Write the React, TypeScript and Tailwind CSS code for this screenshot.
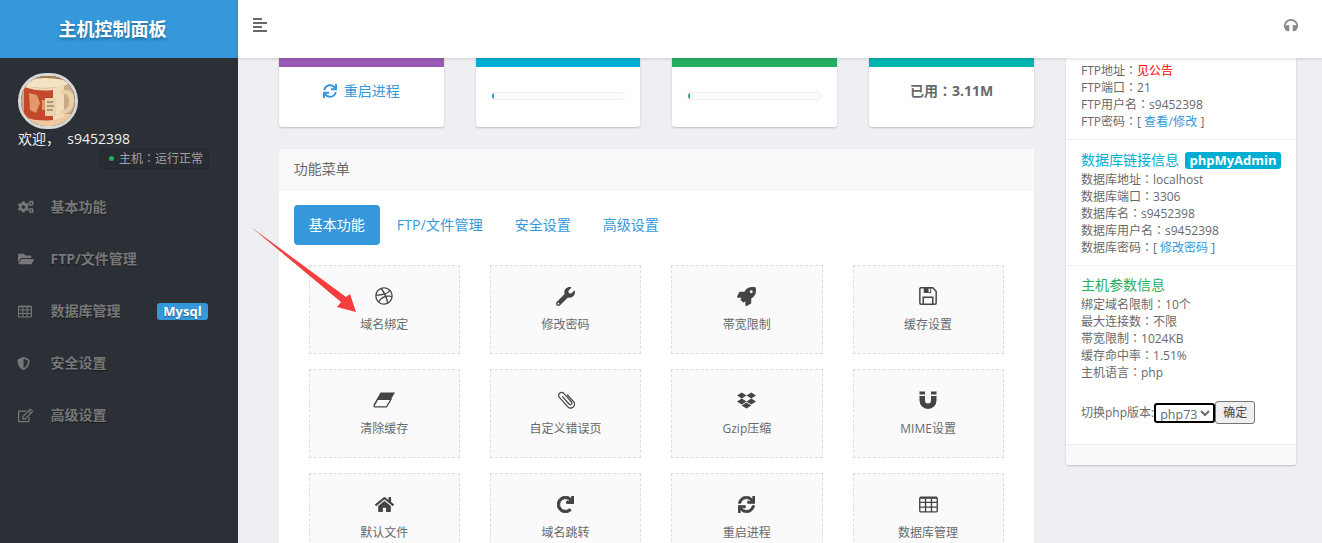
import type { ReactNode } from "react"
import {
  FaAlignLeft,
  FaCogs,
  FaDribbble,
  FaDropbox,
  FaFolderOpen,
  FaHeadphones,
  FaHome,
  FaRedo,
  FaRegEdit,
  FaRocket,
  FaShieldAlt,
  FaSync,
  FaWrench,
} from "react-icons/fa"

const font = "font-['Open_Sans','Noto_Sans_CJK_SC',sans-serif]"

// centred full-width colon, as the original's CJK font has it
function Colon() {
  return <span className="font-['Noto_Sans_CJK_TC',sans-serif] leading-[0]">：</span>
}

function TableIcon({ className }: { className?: string }) {
  return (
    <svg viewBox="0 0 18 16" className={className} fill="none" stroke="currentColor" strokeWidth="1.3">
      <rect x="0.7" y="1.2" width="16.6" height="13.8" rx="1" />
      <path d="M1 1.6h16" strokeWidth="2" />
      <path d="M1 6h16M1 10.5h16M6.2 2v13M11.8 2v13" />
    </svg>
  )
}

function EraserIcon({ className }: { className?: string }) {
  return (
    <svg viewBox="0 0 22 16" className={className}>
      <path d="M7.5 0.5H22L14.5 13H0.5Z" fill="currentColor" />
      <path d="M4.6 7.4H18L13.7 14.6a.6.6 0 0 1-.5.3H1.6a.7.7 0 0 1-.6-1Z" fill="#fafafa" stroke="currentColor" strokeWidth="1.2" />
    </svg>
  )
}

function ClipIcon({ className }: { className?: string }) {
  return (
    <svg viewBox="0 0 18 18" className={className} fill="none" stroke="currentColor" strokeWidth="1.2" strokeLinecap="round">
      <path d="M5.5 5.6 12 13a1.6 1.6 0 0 0 2.6-2L6.6 2.2a3 3 0 0 0-4.4 4l8.6 9.6a3.9 3.9 0 0 0 5.8-5.2L10.5 4" />
    </svg>
  )
}

function MagnetIcon({ className }: { className?: string }) {
  return (
    <svg viewBox="0 0 18 18" className={className} fill="currentColor">
      <path d="M0.5 0.5H6V3.6H0.5ZM12 0.5H17.5V3.6H12Z" />
      <path d="M0.5 5H6V9.5A3 3 0 0 0 12 9.5V5H17.5V9.5A8.5 8.5 0 0 1 0.5 9.5Z" />
    </svg>
  )
}

function FloppyIcon({ className }: { className?: string }) {
  return (
    <svg viewBox="0 0 17 17" className={className} fill="none" stroke="currentColor" strokeWidth="1.4">
      <path d="M1.5 0.8H13L16.2 4V15a1.2 1.2 0 0 1-1.2 1.2H2A1.2 1.2 0 0 1 0.8 15V1.5Z" />
      <path d="M4 16V9.6H13V16" />
      <path d="M4.5 1V5.6H11.5V1Z" fill="currentColor" stroke="none" />
      <path d="M9 1.6H10.6V4.8H9Z" fill="#fafafa" stroke="none" />
    </svg>
  )
}

function Avatar() {
  return (
    <div className="w-[60px] h-[56px] rounded-full border-[3px] border-[#d8d8d8] overflow-hidden">
      <svg viewBox="0 0 54 50" preserveAspectRatio="none" className="w-full h-full block">
        <rect width="54" height="50" fill="#c9a888" />
        <rect y="0" width="54" height="6" fill="#a9794f" />
        <rect y="38" width="54" height="12" fill="#eec9a0" />
        <ellipse cx="24" cy="7" rx="23" ry="5" fill="#f3e4c4" />
        <path d="M3 9q21 7 40 0v32q-20 8-40 0Z" fill="#f2dcb8" />
        <path d="M40 14h6q8 1 7 12-1 12-13 12v-4q8 0 8-8 0-7-4-8h-4Z" fill="#e8cfa8" />
        <path d="M3 11q15 5 29 3v30q-15 2-29-3Z" fill="#c2492a" />
        <path d="M8 17l8 2 3 8-4 10-6-3ZM21 24h7v10h-7Z" fill="#e29a6c" />
        <rect x="24" y="22" width="11" height="18" fill="#e5d3b0" />
        <path d="M26 26h6M26 30h7M26 34h6" stroke="#8a5a40" />
      </svg>
    </div>
  )
}

const sideItems: { icon: ReactNode; label: string; badge?: string }[] = [
  { icon: <FaCogs className="w-[16px] h-[16px]" />, label: "基本功能" },
  { icon: <FaFolderOpen className="w-[16px] h-[16px]" />, label: "FTP/文件管理" },
  { icon: <TableIcon className="w-[14px] h-[13px]" />, label: "数据库管理", badge: "Mysql" },
  { icon: <FaShieldAlt className="w-[13px] h-[13px] -ml-[1px]" />, label: "安全设置" },
  { icon: <FaRegEdit className="w-[15px] h-[15px]" />, label: "高级设置" },
]

const tools: { icon: ReactNode; label: string }[] = [
  { icon: <FaDribbble className="w-[18px] h-[18px]" />, label: "域名绑定" },
  { icon: <FaWrench className="w-[19px] h-[19px]" />, label: "修改密码" },
  { icon: <FaRocket className="w-[19px] h-[19px]" />, label: "帯宽限制" },
  { icon: <FloppyIcon className="w-[18px] h-[18px]" />, label: "缓存设置" },
  { icon: <EraserIcon className="w-[22px] h-[16px]" />, label: "清除缓存" },
  { icon: <ClipIcon className="w-[18px] h-[18px]" />, label: "自定义错误页" },
  { icon: <FaDropbox className="w-[19px] h-[19px]" />, label: "Gzip压缩" },
  { icon: <MagnetIcon className="w-[18px] h-[18px]" />, label: "MIME设置" },
  { icon: <FaHome className="w-[19px] h-[17px]" />, label: "默认文件" },
  { icon: <FaRedo stroke="currentColor" strokeWidth={30} className="w-[17px] h-[17px]" />, label: "域名跳转" },
  { icon: <FaSync stroke="currentColor" strokeWidth={20} className="w-[17px] h-[17px]" />, label: "重启进程" },
  { icon: <TableIcon className="w-[19px] h-[17px]" />, label: "数据库管理" },
]

function StatCard({ strip, children }: { strip: string; children: ReactNode }) {
  return (
    <div className="bg-white rounded-b-[3px] shadow-[0_1px_2px_rgba(0,0,0,0.2)]">
      <div className={"h-[9px] " + strip} />
      <div className="h-[60px] px-[15px] flex items-center justify-center pb-[13px]">{children}</div>
    </div>
  )
}

function Progress({ fill }: { fill: string }) {
  return (
    <div className="w-full h-[8px] mt-[10px] rounded-[4px] border border-[#eeeeee] bg-[#fdfdfd] overflow-hidden">
      <div className={"w-[2px] h-full " + fill} />
    </div>
  )
}

export default function App() {
  return (
    <div className={"relative flex h-[543px] w-[1322px] overflow-hidden bg-[#eeeff3] text-xs text-[#676a6c] " + font}>
      {/* sidebar */}
      <aside className="w-[238px] shrink-0 bg-[#2b2f36]">
        <div className="h-[58px] bg-[#3498db] flex items-center justify-center pr-[13px] text-lg font-bold text-white [text-shadow:0_2px_3px_rgba(0,0,0,0.3)]">
          主机控制面板
        </div>
        <div className="pl-[18px] pt-[15px]">
          <Avatar />
          <div className="text-sm leading-[20px] text-[#f0f0f0]">欢迎， &nbsp;s9452398</div>
          <div className="ml-[81px] mt-[-1px] w-[110px] h-[21px] rounded-[3px] bg-[#282b31] border border-[#25282d] flex items-center pl-[9px] text-xs text-[#a0a3a8]">
            <span className="w-[5px] h-[5px] rounded-full bg-[#27ae60] mr-[5px]" />
            <span>主机<Colon />运行正常</span>
          </div>
        </div>
        <nav className="mt-[12px]">
          {sideItems.map((item) => (
            <div key={item.label} className="h-[52px] flex items-center pl-[18px] text-sm font-bold text-[#777777] [text-shadow:0_1px_1px_rgba(0,0,0,0.4)]">
              <span className="w-[32.5px] flex items-center">{item.icon}</span>
              <span>{item.label}</span>
              {item.badge && (
                <span className="absolute left-[157px] h-[17px] w-[51px] rounded-[3px] bg-[#3498db] text-[13px] leading-[17px] text-center text-white">
                  {item.badge}
                </span>
              )}
            </div>
          ))}
        </nav>
      </aside>

      <div className="flex-1 flex flex-col min-w-0">
        {/* top bar */}
        <header className="relative z-10 h-[58px] shrink-0 bg-white shadow-[0_1px_3px_rgba(0,0,0,0.15)] flex items-center justify-between pl-[14px] pr-[24px] text-[#666666]">
          <FaAlignLeft className="w-[16px] h-[16px] mt-[-8px]" />
          <FaHeadphones className="w-[14px] h-[14px] mt-[-8px] text-[#888888]" />
        </header>

        <div className="flex pl-[40.75px]">
          {/* left column */}
          <main className="w-[755.25px]">
            <div className="grid grid-cols-4 gap-x-[32px]">
              <StatCard strip="bg-[#9b59b6]">
                <span className="flex items-center text-sm text-[#3498db]">
                  <FaSync className="w-[14px] h-[14px] mr-[7px]" />
                  重启进程
                </span>
              </StatCard>
              <StatCard strip="bg-[#00aed4]">
                <Progress fill="bg-[#00aed4]" />
              </StatCard>
              <StatCard strip="bg-[#27ae60]">
                <Progress fill="bg-[#27ae60]" />
              </StatCard>
              <StatCard strip="bg-[#00b5ad]">
                <span className="text-sm font-bold">已用<Colon />3.11M</span>
              </StatCard>
            </div>

            <section className="mt-[22px] bg-white rounded-t-[3px]">
              <div className="h-[41px] pl-[15px] flex items-center text-sm bg-[#f9f9f9] border-b border-[#eeeeee] rounded-t-[3px]">
                功能菜单
              </div>
              <div className="pl-[15px] pt-[15px]">
                <div className="flex text-sm text-[#3498db]">
                  <span className="h-[40px] px-[15px] flex items-center rounded-[4px] bg-[#3498db] text-white mr-[2px]">基本功能</span>
                  <span className="h-[40px] px-[15px] flex items-center mr-[2px] tracking-[0.2px]">FTP/文件管理</span>
                  <span className="h-[40px] px-[15px] flex items-center mr-[2px]">安全设置</span>
                  <span className="h-[40px] px-[15px] flex items-center">高级设置</span>
                </div>
                <div className="ml-[15px] mt-[20px] grid grid-cols-[repeat(4,151.25px)] gap-x-[30px] gap-y-[15px]">
                  {tools.map((tool) => (
                    <div key={tool.label} className="h-[89px] border border-dashed border-[#dddddd] bg-[#fafafa] flex flex-col items-center">
                      <div className="h-[20px] mt-[20px] flex items-center text-[#444444]">{tool.icon}</div>
                      <div className="mt-[10px] leading-[18px]">{tool.label}</div>
                    </div>
                  ))}
                </div>
              </div>
            </section>
          </main>

          {/* right column */}
          <aside className="ml-[32px] w-[230px] h-[407px] bg-white rounded-b-[3px] shadow-[0_1px_2px_rgba(0,0,0,0.2)] leading-[17px] flex flex-col">
            <div className="px-[15px] pt-[4px] pb-[9px] border-b border-[#eeeeee]">
              <div>FTP地址<Colon /><span className="text-[#ff0000]">见公告</span></div>
              <div>FTP端口<Colon />21</div>
              <div>FTP用户名<Colon />s9452398</div>
              <div>FTP密码<Colon />[ <span className="text-[#3498db] tracking-[0.2px]">查看/修改</span> ]</div>
            </div>
            <div className="px-[15px] pt-[11px] pb-[9px] border-b border-[#eeeeee]">
              <div className="flex items-center h-[18px] text-sm text-[#00aed4]">
                数据库链接信息
                <span className="ml-[6px] h-[17px] w-[96px] rounded-[3px] bg-[#00aed4] text-[13px] leading-[17px] font-bold text-white text-center">phpMyAdmin</span>
              </div>
              <div className="mt-[2px]">数据库地址<Colon />localhost</div>
              <div>数据库端口<Colon />3306</div>
              <div>数据库名<Colon />s9452398</div>
              <div>数据库用户名<Colon />s9452398</div>
              <div>数据库密码<Colon />[ <span className="text-[#3498db]">修改密码</span> ]</div>
            </div>
            <div className="flex-1 px-[15px] pt-[10px] border-b border-[#eeeeee]">
              <div className="h-[18px] text-sm leading-[18px] text-[#27ae60]">主机参数信息</div>
              <div className="mt-[2px]">绑定域名限制<Colon />10个</div>
              <div>最大连接数<Colon />不限</div>
              <div>帯宽限制<Colon />1024KB</div>
              <div>缓存命中率<Colon />1.51%</div>
              <div>主机语言<Colon />php</div>
              <div className="mt-[20px] flex items-center">
                切换php版本:
                <select className="w-[61px] h-[20px] border-2 border-black rounded-[3px] bg-white text-[12.5px] leading-none">
                  <option>php73</option>
                </select>
                <button className="w-[40px] h-[23px] border border-[#767676] rounded-[3px] bg-[#efefef] text-[12px] text-[#444444]">确定</button>
              </div>
            </div>
            <div className="h-[20px] bg-[#f9f9f9] rounded-b-[3px]" />
          </aside>
        </div>
      </div>

      {/* annotation arrow */}
      <svg className="absolute inset-0 w-full h-full pointer-events-none z-20" viewBox="0 0 1322 543">
        <path d="M251 227 346 297 350 294 356 312 337 307 341 302Z" fill="#f53d3d" />
      </svg>
    </div>
  )
}
